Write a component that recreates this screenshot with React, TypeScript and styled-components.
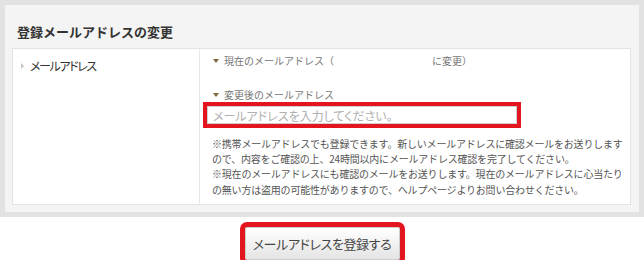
import React from "react";
import styled, { createGlobalStyle } from "styled-components";

const Global = createGlobalStyle`
  html, body { margin: 0; padding: 0; background: #fff; }
  body { font-family: "Noto Sans CJK JP", "Noto Sans", sans-serif; color: #555; }
`;

const Frame = styled.section`
  width: 644px;
  box-sizing: border-box;
  border: 5px solid #e2e2e2;
  background: #f4f4f4;
  padding: 0 8px 7px 7px;
`;

const Title = styled.h2`
  margin: 0;
  padding: 19px 0 0 5px;
  height: 43px;
  box-sizing: border-box;
  font-size: 13px;
  line-height: 16px;
  font-weight: bold;
  color: #333;
`;

const Table = styled.div`
  display: grid;
  grid-template-columns: 186px 1fr;
  background: #fff;
  border: 1px solid #e3e3e3;
  height: 157px;
  box-sizing: border-box;
`;

const LabelCell = styled.div`
  padding: 10px 0 0 8px;
  display: flex;
  align-items: flex-start;
  gap: 6px;
  font-size: 12px;
  line-height: 14px;
  color: #333;
  font-feature-settings: "palt";
  letter-spacing: -1.4px;
`;

const RightTri = styled.span`
  display: inline-block;
  width: 0;
  height: 0;
  margin-top: 4px;
  border-top: 3px solid transparent;
  border-bottom: 3px solid transparent;
  border-left: 3px solid #c4c4c4;
`;

const FieldCell = styled.div`
  border-left: 1px solid #e8e8e8;
  padding: 4px 0 0 8px;
  display: flex;
  flex-direction: column;
`;

const SubLabel = styled.div<{ $top?: number }>`
  display: flex;
  align-items: center;
  gap: 5px;
  padding-left: 5px;
  margin-top: ${(p) => p.$top ?? 0}px;
  font-size: 10px;
  line-height: 15px;
  color: #777;
  white-space: nowrap;
`;

const DownTri = styled.span`
  display: inline-block;
  width: 0;
  height: 0;
  border-left: 3px solid transparent;
  border-right: 3px solid transparent;
  border-top: 4px solid #7d6b3d;
`;

const Blank = styled.span`
  display: inline-block;
  width: 98px;
`;

const EmailInput = styled.input`
  margin: 4px 0 0 -1px;
  width: 310px;
  height: 18px;
  box-sizing: border-box;
  border: 1px solid #cfcfcf;
  outline: 4px solid #e3151f;
  padding: 0 5px;
  font-family: inherit;
  font-size: 12px;
  font-feature-settings: "palt";
  color: #555;
  &::placeholder { color: #b0b0b0; }
`;

const Notes = styled.p`
  margin: 12px 0 0 4px;
  font-size: 10px;
  line-height: 15.2px;
  letter-spacing: -0.2px;
  color: #555;
  white-space: nowrap;
`;

const ButtonRow = styled.div`
  display: flex;
  justify-content: center;
  padding-top: 10px;
`;

const Button = styled.button`
  width: 155px;
  height: 33px;
  box-sizing: border-box;
  border: 1px solid #cdcdcd;
  border-radius: 2px;
  outline: 5px solid #e3151f;
  background: linear-gradient(#ffffff, #e4e4e4);
  font-family: inherit;
  font-size: 13px;
  font-feature-settings: "palt";
  letter-spacing: -0.4px;
  color: #444;
  padding: 0;
  cursor: pointer;
`;

export default function App() {
  return (
    <>
      <Global />
      <Frame>
        <Title>登録メールアドレスの変更</Title>
        <Table>
          <LabelCell>
            <RightTri />
            <span>メールアドレス</span>
          </LabelCell>
          <FieldCell>
            <SubLabel>
              <DownTri />
              <span>
                現在のメールアドレス（<Blank />に変更）
              </span>
            </SubLabel>
            <SubLabel $top={19}>
              <DownTri />
              <span>変更後のメールアドレス</span>
            </SubLabel>
            <EmailInput placeholder="メールアドレスを入力してください。" />
            <Notes>
              ※携帯メールアドレスでも登録できます。新しいメールアドレスに確認メールをお送りします
              <br />
              ので、内容をご確認の上、24時間以内にメールアドレス確認を完了してください。
              <br />
              ※現在のメールアドレスにも確認のメールをお送りします。現在のメールアドレスに心当たり
              <br />
              の無い方は盗用の可能性がありますので、ヘルプページよりお問い合わせください。
            </Notes>
          </FieldCell>
        </Table>
      </Frame>
      <ButtonRow>
        <Button>メールアドレスを登録する</Button>
      </ButtonRow>
    </>
  );
}
